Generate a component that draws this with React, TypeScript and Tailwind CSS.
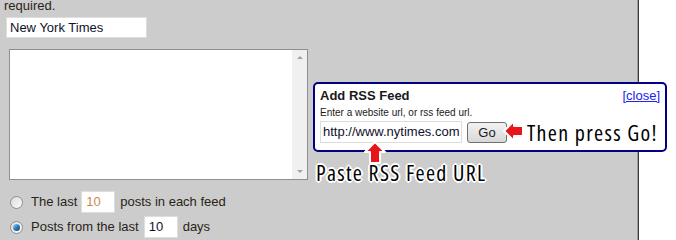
const sans = "font-['Liberation_Sans',Arial,sans-serif]";
const label = "whitespace-nowrap font-['Open_Sans',sans-serif] font-medium [font-stretch:86%] tracking-[1.3px] text-black [text-shadow:1px_1px_0_#fff,-1px_-1px_0_#fff,1px_-1px_0_#fff,-1px_1px_0_#fff,2px_0_0_#fff,-2px_0_0_#fff,0_2px_0_#fff,0_-2px_0_#fff]";

function Radio({ checked }: { checked?: boolean }) {
  return (
    <span className="grid h-[13px] w-[13px] place-items-center rounded-full border border-[#8f8f8f] bg-gradient-to-br from-[#dcdcdc] to-[#fbfbfb]">
      {checked && (
        <span className="h-[7px] w-[7px] rounded-full bg-gradient-to-br from-[#9fd3f5] via-[#2d7fc0] to-[#123f6e]" />
      )}
    </span>
  );
}

function Arrow({ dir }: { dir: "left" | "up" }) {
  // red block arrow with white rim
  const d =
    dir === "left"
      ? "M2 12 L12 2 L12 7 L21 7 L21 17 L12 17 L12 22 Z"
      : "M12 2 L22 12 L17 12 L17 23 L7 23 L7 12 L2 12 Z";
  return (
    <svg width="24" height="25" viewBox="0 0 24 25">
      <path d={d} fill="#e8161b" stroke="#fff" strokeWidth="2" strokeLinejoin="round" />
    </svg>
  );
}

export default function App() {
  return (
    <div className={`relative flex h-[240px] w-[676px] overflow-hidden bg-white ${sans}`}>
      <div className="flex w-[637px] flex-col bg-[#cccccc] text-[13px] text-[#2a2418]">
        <p className="mt-[-2px] ml-[4px] leading-[15px]">required.</p>
        <div className="mt-[4px] ml-[6px] flex h-[21px] w-[141px] items-center border border-[#dedede] bg-white pl-[3px] text-[13px] text-[#10102a]">
          New York Times
        </div>
        <div className="mt-[11px] ml-[9px] flex h-[131px] w-[299px] border border-[#8e8f92] bg-white">
          <div className="flex-1" />
          <div className="flex w-[15px] flex-col items-center justify-between bg-[#f0f0f0] py-[6px]">
            <span className="h-0 w-0 border-x-[3px] border-b-[3px] border-x-transparent border-b-[#a3a3a3]" />
            <span className="h-0 w-0 border-x-[3px] border-t-[3px] border-x-transparent border-t-[#a3a3a3]" />
          </div>
        </div>
        <div className="mt-[11px] ml-[10px] flex h-[22px] items-center">
          <Radio />
          <span className="ml-[8px]">The last</span>
          <span className="ml-[4px] flex h-[22px] w-[34px] items-center border border-[#dedede] bg-white pl-[4px] text-[#c98a4e]">
            10
          </span>
          <span className="ml-[5px]">posts in each feed</span>
        </div>
        <div className="mt-[3px] ml-[10px] flex h-[22px] items-center">
          <Radio checked />
          <span className="ml-[8px]">Posts from the last</span>
          <span className="ml-[5px] flex h-[22px] w-[34px] items-center border border-[#dedede] bg-white pl-[4px] text-[#10102a]">
            10
          </span>
          <span className="ml-[5px]">days</span>
        </div>
      </div>
      <div className="w-px bg-[#9a9a9a]" />
      <div className="w-px bg-[#3a3a3a]" />

      <div className="absolute top-[82px] left-[313px] h-[70px] w-[354px] rounded-[5px] border-2 border-[#000080] bg-white px-[5px] pt-[4px]">
        <div className="flex items-center justify-between leading-[15px]">
          <span className="text-[13px] font-bold text-[#1a1a1a]">Add RSS Feed</span>
          <a href="#" className="text-[13px] text-[#2222ee] underline">[close]</a>
        </div>
        <p className="mt-[4px] text-[10px] leading-[12px] text-[#1a1a1a]">Enter a website url, or rss feed url.</p>
        <div className="mt-[2px] flex items-center">
          <div className="flex h-[22px] w-[142px] items-center border border-[#dcdcdc] pl-[2px] text-[13px] text-[#10102a]">
            http://www.nytimes.com
          </div>
          <button className="ml-[5px] h-[21px] w-[40px] rounded-[3px] border border-[#707070] bg-gradient-to-b from-[#f2f2f2] to-[#d8d8d8] text-[13px] text-[#1a1a1a]">
            Go
          </button>
        </div>
      </div>

      <div className="absolute top-[119px] left-[502px] flex items-center">
        <Arrow dir="left" />
        <span className={`ml-[1px] text-[22px] leading-[24px] ${label}`}>Then press Go!</span>
      </div>
      <div className="absolute top-[140px] left-[363px]">
        <Arrow dir="up" />
      </div>
      <span className={`absolute top-[159px] left-[316px] text-[22px] leading-[26px] ${label}`}>
        Paste RSS Feed URL
      </span>
    </div>
  );
}
